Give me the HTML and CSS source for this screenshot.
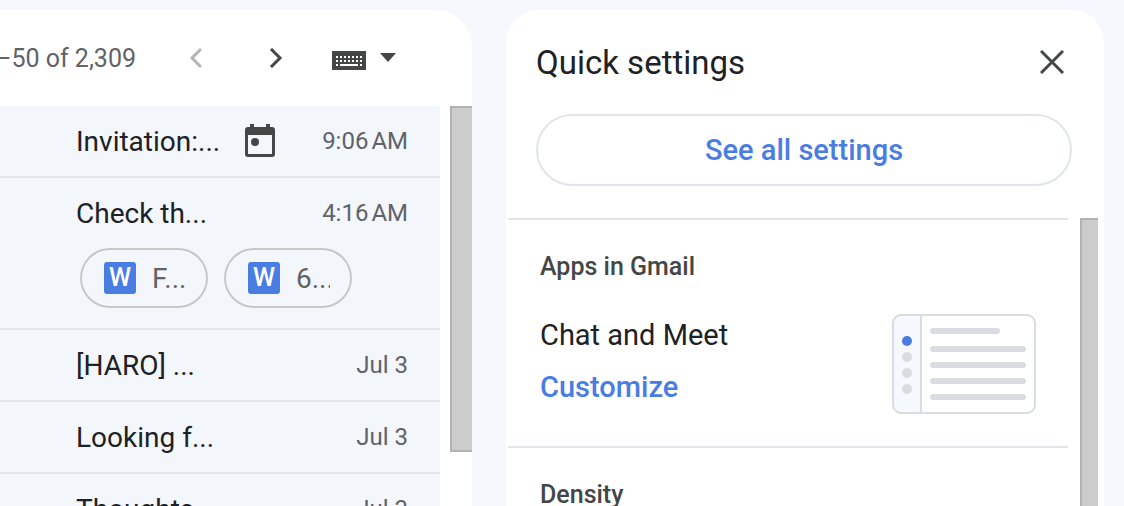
FILE: index.html
```html
<!DOCTYPE html>
<html lang="en">
<head>
	<meta charset="utf-8">
	<title>Inbox</title>
	<link rel="stylesheet" href="styles.css">
</head>

<body>

	<main class="inbox">
		<div class="toolbar">
			<span class="count">–50 of 2,309</span>
			<button type="button" class="nav newer" aria-label="Newer" disabled>
				<svg width="14" height="20" viewBox="0 0 14 20"><path d="M12 1 3 10l9 9"/></svg>
			</button>
			<button type="button" class="nav older" aria-label="Older">
				<svg width="14" height="20" viewBox="0 0 14 20"><path d="M2 1l9 9-9 9"/></svg>
			</button>
			<button type="button" class="input-tools" aria-label="Input tools">
				<svg width="34" height="24" viewBox="0 0 34 24">
					<path d="M0 5h34v19H0z"/>
					<path class="keys" d="M4 11h27M4 15h27"/>
					<path class="bar" d="M4 19h2M8 19h18M28 19h2"/>
				</svg>
				<svg width="17" height="14" viewBox="0 0 17 14"><path d="M0 2h16l-8 9z"/></svg>
			</button>
		</div>

		<div class="messages">
			<ul class="list">
				<li class="row">
					<div class="line">
						<span class="subject">Invitation:...</span>
						<svg class="calendar" width="30" height="34" viewBox="0 0 30 34">
							<path d="M5 0h4v3h12V0h4v3h2a3 3 0 0 1 3 3v24a3 3 0 0 1-3 3H3a3 3 0 0 1-3-3V6a3 3 0 0 1 3-3h2zM3 11v19h24V11z"/>
							<circle cx="10" cy="18" r="4"/>
						</svg>
						<span class="date">9:06&#8239;AM</span>
					</div>
				</li>
				<li class="row">
					<div class="line">
						<span class="subject">Check th...</span>
						<span class="date">4:16&#8239;AM</span>
					</div>
					<div class="chips">
						<button type="button" class="chip"><span class="word">W</span><span class="file">F...</span></button>
						<button type="button" class="chip"><span class="word">W</span><span class="file">6...</span></button>
					</div>
				</li>
				<li class="row">
					<div class="line">
						<span class="subject">[HARO] ...</span>
						<span class="date">Jul 3</span>
					</div>
				</li>
				<li class="row">
					<div class="line">
						<span class="subject">Looking f...</span>
						<span class="date">Jul 3</span>
					</div>
				</li>
				<li class="row">
					<div class="line">
						<span class="subject">Thoughts...</span>
						<span class="date">Jul 3</span>
					</div>
				</li>
			</ul>
			<div class="thumb"></div>
		</div>
	</main>

	<aside class="settings">
		<div class="settings-top">
			<div class="heading">
				<h2>Quick settings</h2>
				<button type="button" class="close" aria-label="Close">
					<svg width="24" height="24" viewBox="0 0 24 24"><path d="M1 1l22 22M23 1L1 23"/></svg>
				</button>
			</div>
			<button type="button" class="see-all">See all settings</button>
		</div>

		<div class="settings-body">
			<div class="sections">
				<section>
					<h3>Apps in Gmail</h3>
					<div class="app">
						<div class="app-text">
							<span>Chat and Meet</span>
							<a href="#">Customize</a>
						</div>
						<svg class="preview" width="144" height="100" viewBox="0 0 144 100">
							<path class="side" d="M29 1H9a8 8 0 0 0-8 8v82a8 8 0 0 0 8 8h20z"/>
							<rect class="frame" x="1" y="1" width="142" height="98" rx="8"/>
							<path class="frame" d="M29 1v98"/>
							<circle class="active" cx="15" cy="27" r="5"/>
							<circle cx="15" cy="43" r="5"/>
							<circle cx="15" cy="59" r="5"/>
							<circle cx="15" cy="75" r="5"/>
							<rect x="38" y="14" width="70" height="6" rx="3"/>
							<rect x="38" y="32" width="96" height="6" rx="3"/>
							<rect x="38" y="48" width="96" height="6" rx="3"/>
							<rect x="38" y="64" width="96" height="6" rx="3"/>
							<rect x="38" y="80" width="96" height="6" rx="3"/>
						</svg>
					</div>
				</section>
				<section>
					<h3>Density</h3>
				</section>
			</div>
			<div class="thumb"></div>
		</div>
	</aside>

</body>
</html>
```
FILE: styles.css
```css
* {
	box-sizing: border-box;
}

body {
	margin: 0;
	height: 100vh;
	display: flex;
	gap: 34px;
	padding: 10px 20px 0 0;
	overflow: hidden;
	background-color: #f5f8fc;
	color: #202124;
	font-family: Roboto, "Open Sans", sans-serif;
	font-size: 29px;
}

button {
	padding: 0;
	border: none;
	background: none;
	font-family: inherit;
	cursor: pointer;
}

/* message list */

.inbox {
	flex: 1;
	min-width: 0;
	display: flex;
	flex-direction: column;
	overflow: hidden;
	background-color: white;
	border-radius: 0 36px 0 0;
}

.toolbar {
	display: flex;
	flex: none;
	align-items: center;
	justify-content: flex-end;
	gap: 32px;
	height: 96px;
	padding-right: 75px;
}

.count {
	flex: none;
	padding-right: 4px;
	color: #5f6368;
	font-size: 25px;
	white-space: nowrap;
}

.nav {
	display: flex;
	flex: none;
	align-items: center;
	justify-content: center;
	width: 48px;
	height: 48px;
}

.nav path {
	fill: none;
	stroke: #444746;
	stroke-width: 3;
}

.newer path {
	stroke: #b4b5b5;
}

.input-tools {
	display: flex;
	flex: none;
	align-items: center;
	gap: 14px;
	fill: #444746;
}

.keys {
	stroke: white;
	stroke-width: 2;
	stroke-dasharray: 2 2;
}

.bar {
	stroke: white;
	stroke-width: 2;
}

.messages {
	flex: 1;
	min-height: 0;
	display: flex;
	gap: 10px;
}

.list {
	flex: 1;
	min-width: 0;
	margin: 0;
	padding: 0;
	list-style: none;
}

.row {
	padding: 0 32px 0 76px;
	background-color: #f3f6fb;
	border-bottom: 2px solid #e1e5e9;
}

.line {
	display: flex;
	align-items: center;
	height: 70px;
	white-space: nowrap;
}

.subject {
	font-size: 28px;
}

.calendar {
	margin-left: 25px;
	fill: #444746;
}

.date {
	margin-left: auto;
	color: #5f6368;
	font-size: 24px;
}

.chips {
	display: flex;
	gap: 16px;
	padding: 0 4px 20px;
}

.chip {
	display: flex;
	align-items: center;
	gap: 16px;
	width: 128px;
	height: 60px;
	padding: 0 20px 0 22px;
	border: 2px solid #c7c9c9;
	border-radius: 30px;
	color: #5f6368;
	font-size: 28px;
}

.word {
	flex: none;
	width: 32px;
	height: 32px;
	border-radius: 3px;
	background-color: #4a7de2;
	color: white;
	font-size: 25px;
	font-weight: 500;
	line-height: 32px;
}

.file {
	overflow: hidden;
}

.thumb {
	width: 22px;
	height: 346px;
	border: 2px solid #b1b3b2;
	border-right: none;
	background-color: #cbcccb;
}

/* quick settings */

.settings {
	width: 598px;
	display: flex;
	flex-direction: column;
	background-color: white;
	border-radius: 32px 32px 0 0;
}

.settings-top {
	padding: 0 32px 32px 30px;
}

.heading {
	display: flex;
	align-items: center;
	justify-content: space-between;
	height: 104px;
}

h2 {
	margin: 0;
	font-size: 33px;
	font-weight: 400;
}

.close {
	display: flex;
	padding: 8px;
}

.close path {
	fill: none;
	stroke: #444746;
	stroke-width: 3;
}

.see-all {
	width: 100%;
	height: 72px;
	border: 2px solid #e1e5e9;
	border-radius: 36px;
	color: #4a7de2;
	font-size: 29px;
	font-weight: 500;
}

.settings-body {
	flex: 1;
	min-height: 0;
	display: flex;
	gap: 12px;
	padding: 0 6px 0 2px;
}

.settings-body .thumb {
	width: 18px;
	height: 100%;
	border-bottom: none;
}

.sections {
	flex: 1;
}

section {
	padding: 32px;
	border-top: 2px solid #e1e5e9;
}

h3 {
	margin: 0;
	color: #444746;
	font-size: 25px;
	font-weight: 500;
	line-height: 30px;
}

.app {
	display: flex;
	justify-content: space-between;
	padding-top: 32px;
}

.app-text {
	display: flex;
	flex-direction: column;
	gap: 10px;
	line-height: 42px;
}

.app-text a {
	color: #4a7de2;
	font-weight: 500;
	text-decoration: none;
}

.preview {
	fill: #d9dce1;
}

.frame {
	fill: none;
	stroke: #d9dce1;
	stroke-width: 2;
}

.side {
	fill: #f5f9fd;
}

.active {
	fill: #4a7de2;
}
```
